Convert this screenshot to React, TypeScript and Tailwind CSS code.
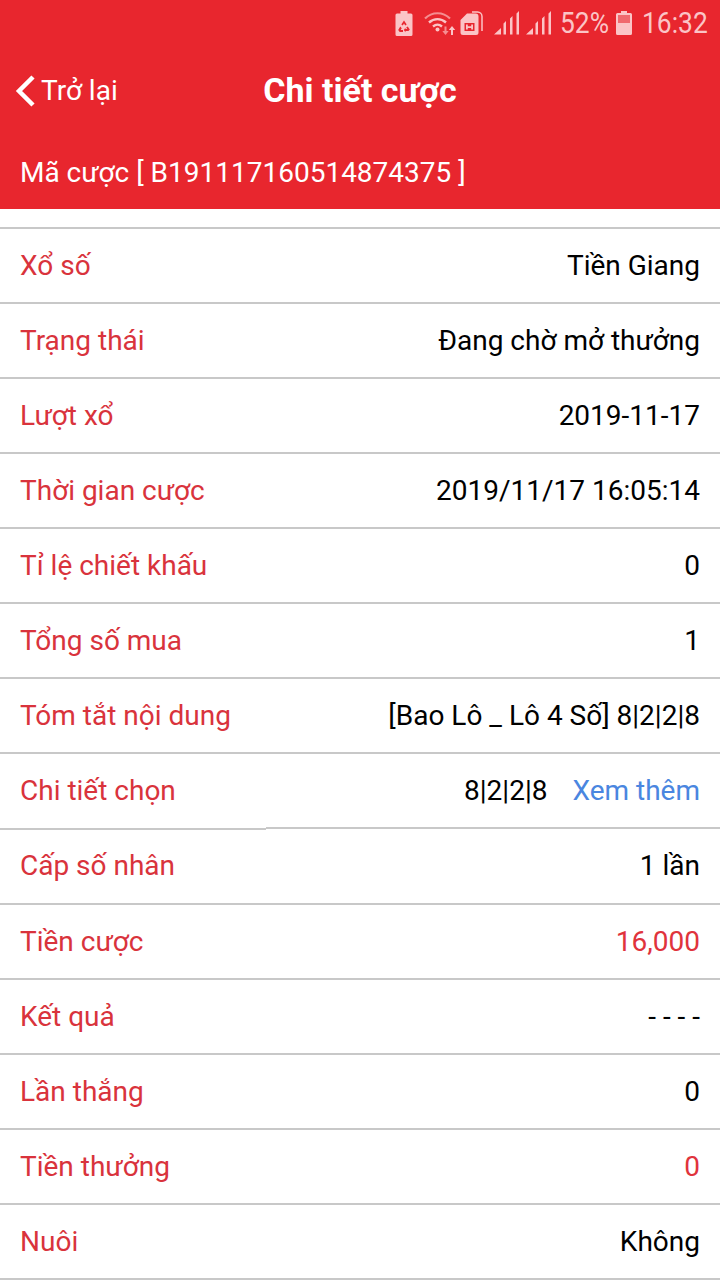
interface DetailRow {
  label: string
  value: string
  valueClass?: string
  more?: boolean
  rowClass?: string
}

const rows: DetailRow[] = [
  { label: 'Xổ số', value: 'Tiền Giang' },
  { label: 'Trạng thái', value: 'Đang chờ mở thưởng' },
  { label: 'Lượt xổ', value: '2019-11-17' },
  { label: 'Thời gian cược', value: '2019/11/17 16:05:14' },
  { label: 'Tỉ lệ chiết khấu', value: '0' },
  { label: 'Tổng số mua', value: '1' },
  { label: 'Tóm tắt nội dung', value: '[Bao Lô _ Lô 4 Số] 8|2|2|8' },
  { label: 'Chi tiết chọn', value: '8|2|2|8', more: true },
  { label: 'Cấp số nhân', value: '1 lần', rowClass: 'h-[76px]' },
  { label: 'Tiền cược', value: '16,000', valueClass: 'text-[#e0333c]', rowClass: 'h-[75px] pt-[1px]' },
  { label: 'Kết quả', value: '- - - -', rowClass: 'h-[75px] pt-[1px]' },
  { label: 'Lần thắng', value: '0' },
  { label: 'Tiền thưởng', value: '0', valueClass: 'text-[#e0333c]' },
  { label: 'Nuôi', value: 'Không' },
]

function SignalIcon({ className }: { className: string }) {
  return (
    <svg width="25" height="24" viewBox="0 0 25 24" className={className}>
      <path fill="currentColor" d="M0 23.500 7 17v6.500zM9.500 23.500V12.500L12 10v13.500zM16 23.500V7.500L18.500 5v18.500zM22.500 23.500V2.500L25 0v23.500z" />
    </svg>
  )
}

function StatusBar() {
  return (
    <div className="flex h-[46px] items-center justify-end pr-[13px] text-[#fbc4c6]">
      {/* battery saver */}
      <svg width="18" height="25" viewBox="0 0 18 25">
        <path fill="currentColor" fillRule="evenodd" d="M5.500 0h7v2.500H16a1.500 1.500 0 0 1 1.500 1.500v19.500A1.500 1.500 0 0 1 16 25H2a1.500 1.500 0 0 1-1.500-1.500V4A1.500 1.500 0 0 1 2 2.500h3.500zM9 9.500 6.300 13.500l1.500.9L9 12.500l1.200 1.900 1.500-.9zM5.300 15.500 3.200 19l1.500 2H8v-2H5.700l1-1.700zM12.700 15.500l-1.500.9 1 1.600H10.500v-1.200L8.800 19l1.700 2.200V20h3l1.300-1.500z" />
      </svg>
      {/* wifi with arrows */}
      <svg width="32" height="24" viewBox="0 0 32 24" className="ml-[11px]">
        <path fill="none" stroke="#f58d91" strokeWidth="2.200" d="M1 7.500C8 .5 19 .5 26 7.500" />
        <path fill="none" stroke="currentColor" strokeWidth="2.400" d="M5 11.500c5-4.500 12-4.500 17 0M9 15.500c3-2.500 6-2.500 9 0" />
        <circle cx="13.500" cy="18.500" r="2" fill="currentColor" />
        <path fill="#f58d91" d="M20.500 15.500h2v4.500h2.200l-3.200 4-3.200-4h2.200z" />
        <path fill="currentColor" d="M27 24v-5h-2.200l3.200-4 3.200 4H29v5z" />
      </svg>
      {/* sim */}
      <svg width="23" height="24" viewBox="0 0 23 24" className="ml-[4px]">
        <path fill="none" stroke="currentColor" strokeWidth="1.500" d="M12 1h5.500a4.500 4.500 0 0 1 4.500 4.500V20" />
        <path fill="currentColor" fillRule="evenodd" d="M7 2.500h8.500a3 3 0 0 1 3 3V21.500a2.500 2.500 0 0 1-2.500 2.500H3a2.500 2.500 0 0 1-2.500-2.500V9zM4.500 12v8h10v-8zM6 13.500h1.800v1.800h3.400v-1.800H13v5h-1.800v-1.500H7.800v1.500H6z" />
      </svg>
      <SignalIcon className="ml-[11px]" />
      <SignalIcon className="ml-[7px]" />
      <span className="ml-[9px] w-[47px] origin-left scale-x-[0.91] whitespace-nowrap text-[29px] leading-none">52%</span>
      {/* battery */}
      <svg width="16" height="24" viewBox="0 0 16 24" className="ml-[9px]">
        <path fill="currentColor" d="M5 0h6v2h3.500A1.500 1.500 0 0 1 16 3.500V22.500a1.500 1.500 0 0 1-1.500 1.500H1.500A1.500 1.500 0 0 1 0 22.500V3.500A1.500 1.500 0 0 1 1.500 2H5z" />
        <rect x="2" y="4" width="12" height="8" fill="#f0696e" />
      </svg>
      <span className="ml-[10px] w-[65px] origin-left scale-x-[0.91] whitespace-nowrap text-[29px] leading-none">16:32</span>
    </div>
  )
}

function Row({ row }: { row: DetailRow }) {
  return (
    <div className={`relative flex items-center justify-between border-b-2 border-[#c8c8c8] px-[20px] text-[28px] ${row.rowClass ?? 'h-[75px]'}`}>
      <span className="text-[#d9333c]">{row.label}</span>
      <div className="flex items-center">
        <span className={row.valueClass ?? 'text-black'}>{row.value}</span>
        {row.more && <span className="ml-[25px] text-[#4a86e0]">Xem thêm</span>}
      </div>
      {/* the divider under this row is one pixel lower on its left part */}
      {row.more && <div className="absolute bottom-[-3px] left-0 h-[3px] w-[266px] border-t border-white bg-[#c8c8c8]" />}
    </div>
  )
}

export default function App() {
  return (
    <div className="h-[1280px] w-[720px] overflow-hidden bg-white font-['Roboto',sans-serif]">
      <div className="h-[209px] bg-[#e8262e] text-white">
        <StatusBar />
        <div className="relative flex h-[90px] items-center pl-[15px]">
          <svg width="22" height="32" viewBox="0 0 22 32" fill="none" stroke="white" strokeWidth="4.500" className="mr-[4px]">
            <path d="M18 2 4 16l14 14" />
          </svg>
          <span className="text-[28px]">Trở lại</span>
          <span className="absolute inset-x-0 pb-[1px] text-center text-[34px] font-bold">Chi tiết cược</span>
        </div>
        <div className="pl-[20px] text-[28px] leading-[74px]">Mã cược [ B191117160514874375 ]</div>
      </div>
      <div className="h-[18px]" />
      <div className="border-t-2 border-[#c8c8c8]">
        {rows.map((row) => (
          <Row key={row.label} row={row} />
        ))}
      </div>
    </div>
  )
}
